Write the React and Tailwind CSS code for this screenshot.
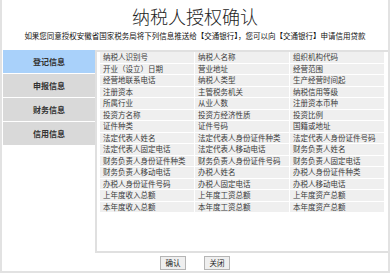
import React from "react";

const rows = [
  ["纳税人识别号", "纳税人名称", "组织机构代码"],
  ["开业（设立）日期", "营业地址", "经营范围"],
  ["经营地联系电话", "纳税人类型", "生产经营时间起"],
  ["注册资本", "主管税务机关", "纳税信用等级"],
  ["所属行业", "从业人数", "注册资本币种"],
  ["投资方名称", "投资方经济性质", "投资比例"],
  ["证件种类", "证件号码", "国籍或地址"],
  ["法定代表人姓名", "法定代表人身份证件种类", "法定代表人身份证件号码"],
  ["法定代表人固定电话", "法定代表人移动电话", "财务负责人姓名"],
  ["财务负责人身份证件种类", "财务负责人身份证件号码", "财务负责人固定电话"],
  ["财务负责人移动电话", "办税人姓名", "办税人身份证件种类"],
  ["办税人身份证件号码", "办税人固定电话", "办税人移动电话"],
  ["上年度收入总额", "上年度工资总额", "上年度资产总额"],
  ["本年度收入总额", "本年度工资总额", "本年度资产总额"],
];

const nav = ["登记信息", "申报信息", "财务信息", "信用信息"];

export default function App() {
  return (
    <div className="w-[390px] h-[275px] bg-white font-['Noto_Sans_CJK_SC','Noto_Sans',sans-serif] text-[#222]">
      <div className="w-[390px] h-[273px] border-x-2 border-b-2 border-[#e2e2e2] flex flex-col">
        <div className="pt-[5px] text-center text-[18px] leading-[22px] font-light text-[#222]">纳税人授权确认</div>
        <div className="mt-[4px] text-center text-[7.5px] leading-[10px] text-[#111]">
          如果您同意授权安徽省国家税务局将下列信息推送给【交通银行】，您可以向【交通银行】申请信用贷款
        </div>
        <div className="mt-[9px] flex h-[203px] pl-[1px]">
          <div className="w-[92px] flex flex-col gap-[1px]">
            {nav.map((n, i) => (
              <div
                key={n}
                className={
                  "h-[23px] flex items-center justify-center text-[8px] font-bold text-[#333] " +
                  (i === 0 ? "bg-[#a9d1fa]" : "bg-[#d9d9d9]")
                }
              >
                {n}
              </div>
            ))}
          </div>
          <div className="flex-1 border-l-2 border-t-2 border-b-2 border-[#e0e0e0] pl-[3px]">
            <div className="w-[284px] grid grid-cols-3 gap-[1px]">
              {rows.flat().map((c, i) => (
                <div
                  key={i}
                  className="h-[10.5px] bg-[#efefef] pl-[3px] text-[7.5px] leading-[10.5px] text-[#3a3a3a] whitespace-nowrap overflow-hidden"
                >
                  {c}
                </div>
              ))}
            </div>
          </div>
        </div>
        <div className="flex justify-center gap-[18px] pt-[3px]">
          <button className="w-[26px] h-[14px] bg-[#efefef] border border-[#b5b5b5] text-[7.5px] leading-[12px] text-[#222]">确认</button>
          <button className="w-[26px] h-[14px] bg-[#efefef] border border-[#b5b5b5] text-[7.5px] leading-[12px] text-[#222]">关闭</button>
        </div>
      </div>
    </div>
  );
}
